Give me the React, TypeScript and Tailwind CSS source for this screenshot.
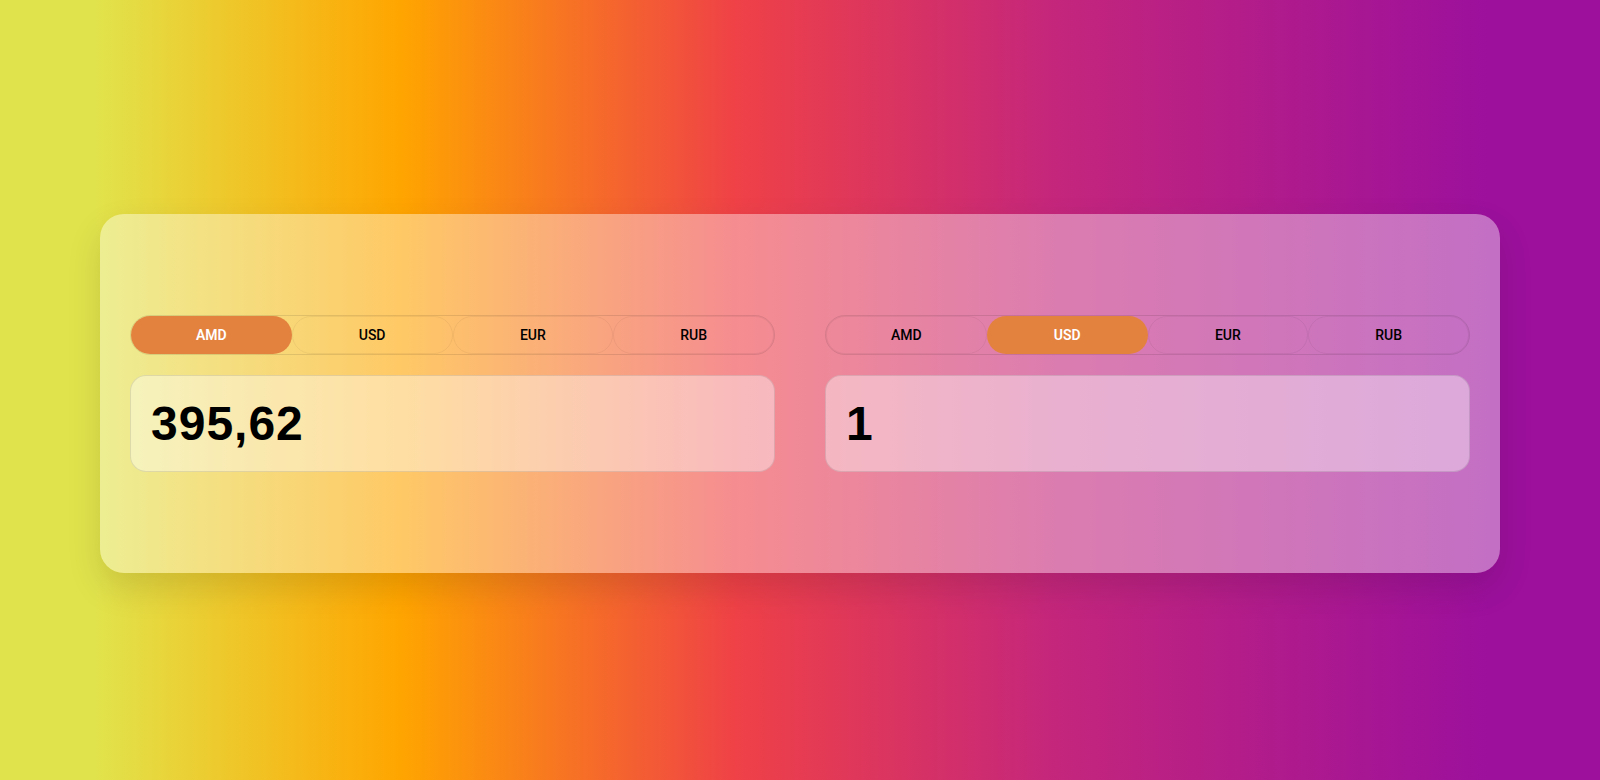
import { useState } from "react";

const currencies = ["AMD", "USD", "EUR", "RUB"];

function CurrencyBlock({ active, value }: { active: string; value: string }) {
  const [selected, setSelected] = useState(active);
  const [amount, setAmount] = useState(value);

  return (
    <div className="flex flex-col gap-5">
      <div className="grid grid-cols-4 h-10 rounded-full border border-black/10">
        {currencies.map((c) => (
          <button
            key={c}
            onClick={() => setSelected(c)}
            className={
              c === selected
                ? "rounded-full bg-[#e3823f] text-white text-sm font-semibold font-['Roboto',sans-serif]"
                : "rounded-full border border-black/5 text-black text-sm font-medium font-['Roboto',sans-serif]"
            }
          >
            {c}
          </button>
        ))}
      </div>
      <input
        value={amount}
        onChange={(e) => setAmount(e.target.value)}
        className="h-[97px] w-full rounded-2xl border border-black/10 bg-white/40 px-5 text-5xl font-bold tracking-[1px] text-black outline-none font-['Liberation_Sans',Arial,sans-serif]"
      />
    </div>
  );
}

export default function App() {
  return (
    <div className="min-h-screen flex items-center justify-center bg-[linear-gradient(90deg,#e1e34c_6%,#ffa500_25%,#ef4147_46%,#c4267c_66%,#9c109c_93%)]">
      <div className="w-[1400px] mt-[6px] rounded-3xl bg-white/40 px-[30px] pt-[101px] pb-[101px] shadow-[0_15px_35px_rgba(0,0,0,0.12)]">
        <div className="grid grid-cols-2 gap-[50px]">
          <CurrencyBlock active="AMD" value="395,62" />
          <CurrencyBlock active="USD" value="1" />
        </div>
      </div>
    </div>
  );
}
